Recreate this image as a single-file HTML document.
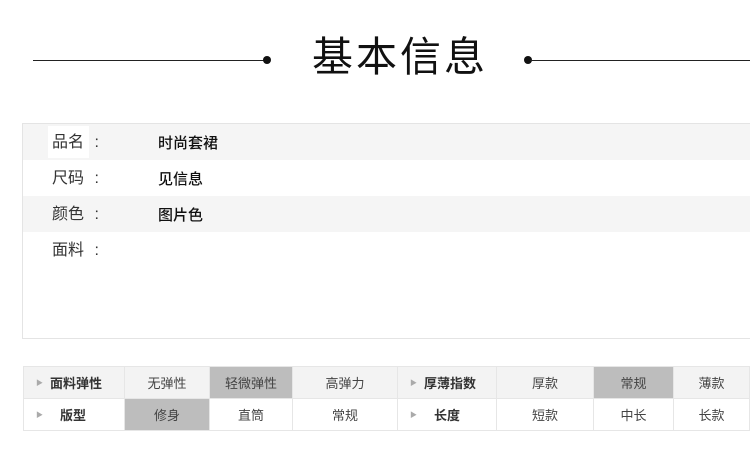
<!DOCTYPE html><html><head><meta charset="utf-8"><style>
body{margin:0;width:750px;height:468px;background:#fff;position:relative;overflow:hidden;font-family:"Liberation Sans","Noto Sans CJK SC",sans-serif;color:#222}
.a{position:absolute}
.line{height:1px;background:#222;top:60px}
.dot{width:8px;height:8px;border-radius:50%;background:#111;top:56px}
.row{left:23px;width:727px;height:36px}
.lab{left:52px;font-size:16px;color:#333;line-height:36px}
.val{left:158px;font-size:15px;color:#111;line-height:36px;font-weight:500}
table{position:absolute;left:23px;top:366px;border-collapse:collapse;font-size:13px;color:#444}
td{border:1px solid #e6e6e6;text-align:center;height:31px;padding:0}
.r1 td{background:#f3f3f3}
.h{background:#bdbdbd!important}
.k{font-weight:bold;color:#333;text-align:left;position:relative}
.k:before{content:"▶";font-size:7px;color:#aaa;position:absolute;left:12px;top:11px}
</style></head><body>
<div class="a line" style="left:33px;width:232px"></div><div class="a dot" style="left:263px"></div>
<div class="a" style="left:312px;top:30px;font-size:41px;color:#111;line-height:54px;letter-spacing:3px">基本信息</div>
<div class="a dot" style="left:524px"></div><div class="a line" style="left:530px;width:220px"></div>
<div class="a" style="left:22px;top:123px;width:728px;height:216px;border:1px solid #e4e4e4;border-right:none;box-sizing:border-box"></div>
<div class="a row" style="top:124px;background:#f5f5f5"></div>
<div class="a row" style="top:196px;background:#f5f5f5"></div>
<div class="a" style="left:48px;top:126px;width:41px;height:32px;background:#fff"></div>
<div class="a lab" style="top:125px">品名 <span style="margin-left:6px">:</span></div><div class="a val" style="top:126px">时尚套裙</div>
<div class="a lab" style="top:161px">尺码 <span style="margin-left:6px">:</span></div><div class="a val" style="top:162px">见信息</div>
<div class="a lab" style="top:197px">颜色 <span style="margin-left:6px">:</span></div><div class="a val" style="top:198px">图片色</div>
<div class="a lab" style="top:233px">面料 <span style="margin-left:6px">:</span></div>
<table>
<tr class="r1"><td class="k" style="width:101px;padding-left:26px;box-sizing:border-box">面料弹性</td><td style="width:84px">无弹性</td><td class="h" style="width:82px">轻微弹性</td><td style="width:104px">高弹力</td><td class="k" style="width:99px;padding-left:26px;box-sizing:border-box">厚薄指数</td><td style="width:96px">厚款</td><td class="h" style="width:79px">常规</td><td style="width:75px">薄款</td></tr>
<tr><td class="k" style="padding-left:36px;box-sizing:border-box">版型</td><td class="h">修身</td><td>直筒</td><td>常规</td><td class="k" style="padding-left:36px;box-sizing:border-box">长度</td><td>短款</td><td>中长</td><td>长款</td></tr>
</table>
</body></html>
